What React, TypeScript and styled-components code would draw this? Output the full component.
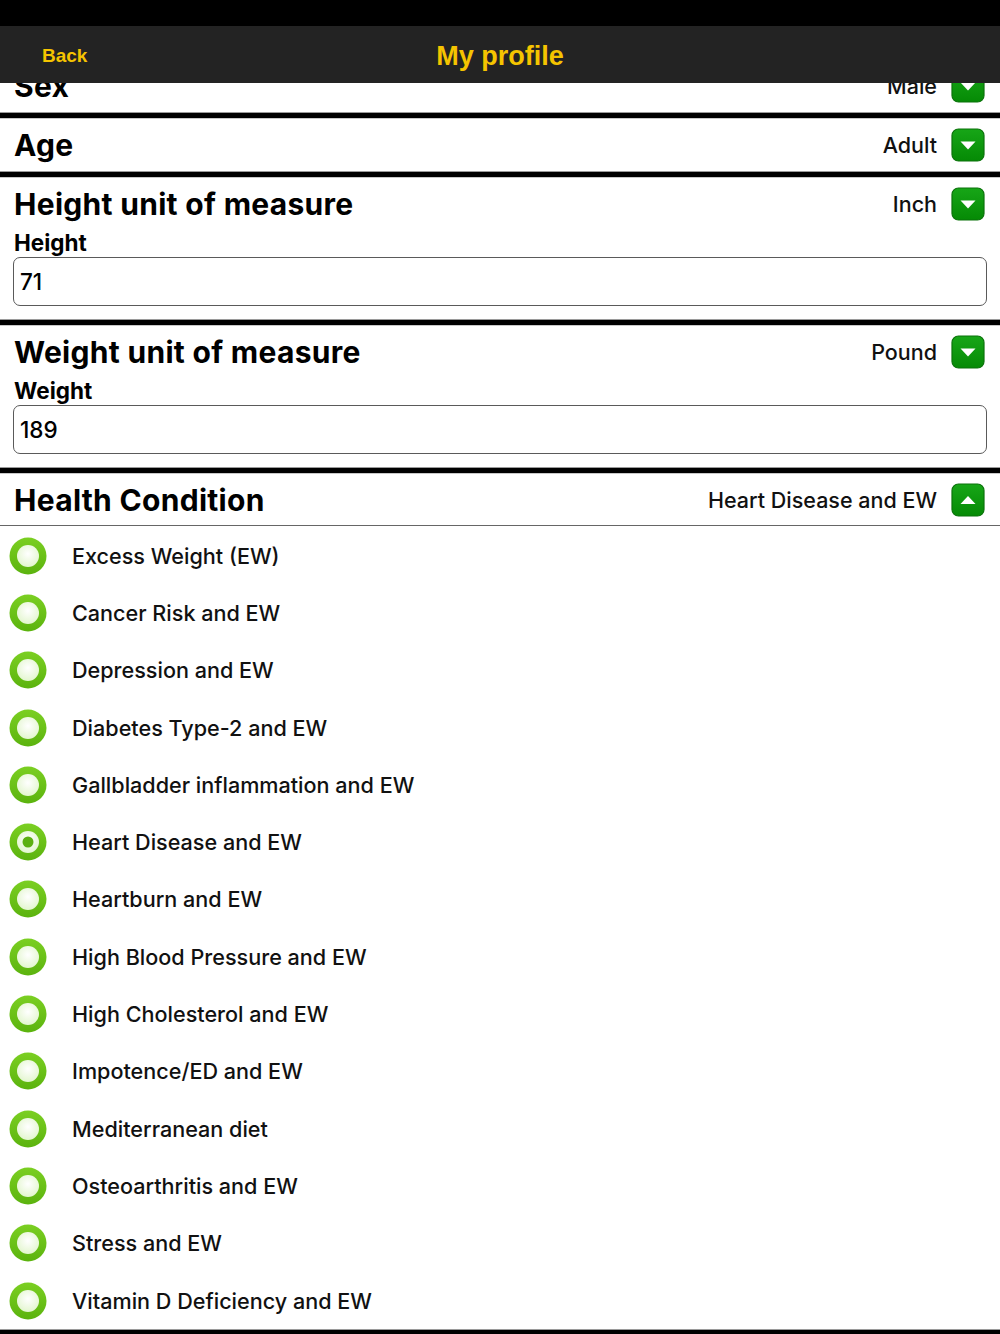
import React from "react";
import styled, { createGlobalStyle } from "styled-components";

const GlobalStyle = createGlobalStyle`
  html, body {
    margin: 0;
    padding: 0;
    background: #ffffff;
  }
  body {
    font-family: Inter, "Liberation Sans", Arial, sans-serif;
    color: #111;
  }
`;

const Page = styled.div`
  width: 1000px;
  height: 1334px;
  display: flex;
  flex-direction: column;
  overflow: hidden;
  background: #fff;
`;

const StatusBar = styled.div`
  height: 26px;
  background: #000;
  flex-shrink: 0;
`;

const NavBar = styled.div`
  height: 57px;
  background: #232323;
  flex-shrink: 0;
  display: grid;
  grid-template-columns: 1fr auto 1fr;
  align-items: center;
  padding: 2px 42px 0 42px;
  box-sizing: border-box;
  position: relative;
  z-index: 2;
`;

const BackButton = styled.div`
  font-family: "Liberation Sans", Arial, sans-serif;
  font-weight: 700;
  font-size: 19px;
  color: #f5c400;
`;

const NavTitle = styled.div`
  font-family: "Liberation Sans", Arial, sans-serif;
  font-weight: 700;
  font-size: 27px;
  color: #f5c400;
  margin-top: 2px;
`;

const Viewport = styled.div`
  flex: 1;
  overflow: hidden;
`;

const Scroller = styled.div`
  margin-top: -23px;
`;

const Separator = styled.div`
  height: 5px;
  background: #000;
  border-top: 1px solid #9a9a9a;
  border-bottom: 1px solid #c8c8c8;
`;

const Section = styled.div<{ $withInput?: boolean }>`
  display: flex;
  flex-direction: column;
  padding-bottom: ${(p) => (p.$withInput ? "13px" : "0")};
`;

const HeaderRow = styled.div<{ $line?: boolean }>`
  height: 52px;
  display: flex;
  align-items: center;
  padding: 0 15px 0 14px;
  box-sizing: border-box;
  border-bottom: ${(p) => (p.$line ? "1px solid #666" : "none")};
`;

const Title = styled.div`
  flex: 1;
  font-family: Inter, "Liberation Sans", Arial, sans-serif;
  font-weight: 700;
  font-size: 30px;
  letter-spacing: 0.3px;
  color: #000;
`;

const Value = styled.div`
  font-size: 21.5px;
  font-weight: 500;
  color: #111;
  margin-right: 14px;
`;

const FieldLabel = styled.div`
  font-weight: 700;
  font-size: 22.5px;
  line-height: 26px;
  padding-left: 14px;
  color: #000;
`;

const InputBox = styled.div`
  margin: 1px 13px 0 13px;
  height: 49px;
  box-sizing: border-box;
  border: 1.5px solid #5a5a5a;
  border-radius: 7px;
  display: flex;
  align-items: center;
  padding-left: 6px;
  font-size: 22.5px;
  font-weight: 500;
  color: #000;
`;

const List = styled.div`
  display: flex;
  flex-direction: column;
  padding-top: 1px;
`;

const Option = styled.div`
  height: 57.3px;
  display: flex;
  align-items: center;
  gap: 25px;
  padding-left: 9px;
`;

const OptionText = styled.div`
  font-size: 21.6px;
  font-weight: 500;
  color: #111;
`;

const DropButton = ({ up }: { up?: boolean }) => (
  <svg width="34" height="34" viewBox="0 0 34 34">
    <defs>
      <linearGradient id={up ? "gbU" : "gbD"} x1="0" y1="0" x2="0" y2="1">
        <stop offset="0" stopColor="#17a617" />
        <stop offset="1" stopColor="#058a05" />
      </linearGradient>
    </defs>
    <rect
      x="1"
      y="1"
      width="32"
      height="32"
      rx="6.5"
      fill={`url(#${up ? "gbU" : "gbD"})`}
      stroke="#0a730a"
      strokeWidth="1.2"
    />
    {up ? (
      <polygon points="9.5,21 24.5,21 17,13" fill="#fff" />
    ) : (
      <polygon points="9.5,13.5 24.5,13.5 17,21.5" fill="#fff" />
    )}
  </svg>
);

const Radio = ({ checked }: { checked?: boolean }) => (
  <svg width="38" height="38" viewBox="0 0 38 38">
    <defs>
      <linearGradient id="ringG" x1="0" y1="0" x2="0" y2="1">
        <stop offset="0" stopColor="#7bcf22" />
        <stop offset="1" stopColor="#5bb30e" />
      </linearGradient>
      <radialGradient id="innerG" cx="0.5" cy="0.4" r="0.6">
        <stop offset="0" stopColor="#ffffff" />
        <stop offset="1" stopColor="#e3f6cf" />
      </radialGradient>
    </defs>
    <circle cx="19" cy="19" r="18.5" fill="url(#ringG)" />
    <circle cx="19" cy="19" r="11" fill="url(#innerG)" />
    {checked && <circle cx="19" cy="19" r="5.5" fill="#5cb012" />}
  </svg>
);

const conditions = [
  "Excess Weight (EW)",
  "Cancer Risk and EW",
  "Depression and EW",
  "Diabetes Type-2 and EW",
  "Gallbladder inflammation and EW",
  "Heart Disease and EW",
  "Heartburn and EW",
  "High Blood Pressure and EW",
  "High Cholesterol and EW",
  "Impotence/ED and EW",
  "Mediterranean diet",
  "Osteoarthritis and EW",
  "Stress and EW",
  "Vitamin D Deficiency and EW",
];

const selected = "Heart Disease and EW";

export default function App() {
  return (
    <Page>
      <GlobalStyle />
      <StatusBar />
      <NavBar>
        <BackButton>Back</BackButton>
        <NavTitle>My profile</NavTitle>
        <div />
      </NavBar>
      <Viewport>
        <Scroller>
          <Section>
            <HeaderRow>
              <Title>Sex</Title>
              <Value>Male</Value>
              <DropButton />
            </HeaderRow>
          </Section>
          <Separator />
          <Section>
            <HeaderRow>
              <Title>Age</Title>
              <Value>Adult</Value>
              <DropButton />
            </HeaderRow>
          </Section>
          <Separator />
          <Section $withInput>
            <HeaderRow>
              <Title>Height unit of measure</Title>
              <Value>Inch</Value>
              <DropButton />
            </HeaderRow>
            <FieldLabel>Height</FieldLabel>
            <InputBox>71</InputBox>
          </Section>
          <Separator />
          <Section $withInput>
            <HeaderRow>
              <Title>Weight unit of measure</Title>
              <Value>Pound</Value>
              <DropButton />
            </HeaderRow>
            <FieldLabel>Weight</FieldLabel>
            <InputBox>189</InputBox>
          </Section>
          <Separator />
          <Section>
            <HeaderRow $line>
              <Title>Health Condition</Title>
              <Value>Heart Disease and EW</Value>
              <DropButton up />
            </HeaderRow>
            <List>
              {conditions.map((c) => (
                <Option key={c}>
                  <Radio checked={c === selected} />
                  <OptionText>{c}</OptionText>
                </Option>
              ))}
            </List>
          </Section>
          <Separator />
        </Scroller>
      </Viewport>
    </Page>
  );
}
